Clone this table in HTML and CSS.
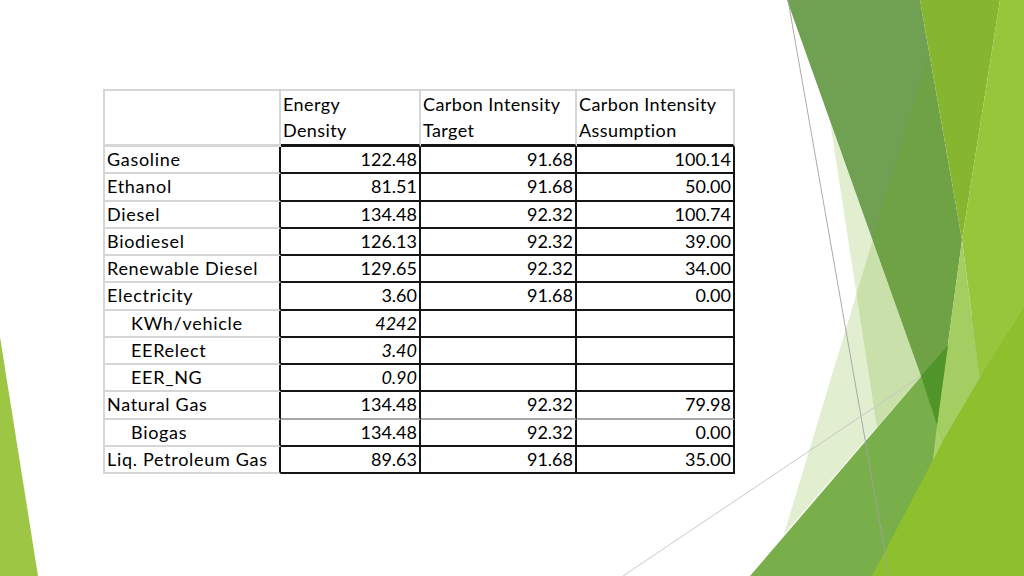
FILE: index.html
```html
<!DOCTYPE html>
<html lang="en">
<head>
<meta charset="utf-8">
<title>Fuel table</title>
<link rel="stylesheet" href="styles.css">
</head>
<body>
<div class="slide">
  <svg class="art" width="1024" height="576" viewBox="0 0 1024 576" aria-hidden="true">
    <polygon points="0,337 38,576 0,576" fill="#9cc643"/>
    <polygon points="830,121 877,428 921,376" fill="rgba(110,170,20,0.2)"/>
    <polygon points="787,0 920,0 962,240 937,425 921,376" fill="#70a051"/>
    <polygon points="928,57 962,240 937,425 921,376 784,534" fill="rgba(110,170,20,0.2)"/>
    <polygon points="920,0 1000,0 962,240" fill="#86b52f"/>
    <polygon points="750,576 948,345 1024,258 1024,576" fill="#78af4a"/>
    <polygon points="1000,0 1024,0 1024,308 980,378 962,240" fill="#97c63d"/>
    <polygon points="962,240 980,378 943,441 937,425" fill="#a4ce62"/>
    <polygon points="937,425 943,441 932,468" fill="#a9d06a"/>
    <polygon points="1024,308 1024,576 872,576 943,441 980,378" fill="#8dc02c"/>
    <polygon points="921,376 948,345 937,425" fill="#50952a"/>
    <line x1="788" y1="0" x2="889" y2="576" stroke="#a0a0a0" stroke-width="0.9"/>
    <line x1="623" y1="576" x2="921" y2="376" stroke="#c4c4c4" stroke-width="0.9"/>
  </svg>
  <div class="table">
    <div class="h first"></div>
    <div class="h">Energy<br>Density</div>
    <div class="h">Carbon Intensity<br>Target</div>
    <div class="h">Carbon Intensity<br>Assumption</div>

    <div class="l">Gasoline</div><div class="n">122.48</div><div class="n">91.68</div><div class="n">100.14</div>
    <div class="l">Ethanol</div><div class="n">81.51</div><div class="n">91.68</div><div class="n">50.00</div>
    <div class="l">Diesel</div><div class="n">134.48</div><div class="n">92.32</div><div class="n">100.74</div>
    <div class="l">Biodiesel</div><div class="n">126.13</div><div class="n">92.32</div><div class="n">39.00</div>
    <div class="l">Renewable Diesel</div><div class="n">129.65</div><div class="n">92.32</div><div class="n">34.00</div>
    <div class="l">Electricity</div><div class="n">3.60</div><div class="n">91.68</div><div class="n">0.00</div>
    <div class="l sub">KWh/vehicle</div><div class="n it">4242</div><div class="n"></div><div class="n"></div>
    <div class="l sub">EERelect</div><div class="n it">3.40</div><div class="n"></div><div class="n"></div>
    <div class="l sub">EER_NG</div><div class="n it">0.90</div><div class="n"></div><div class="n"></div>
    <div class="l">Natural Gas</div><div class="n gb">134.48</div><div class="n gb">92.32</div><div class="n gb">79.98</div>
    <div class="l sub">Biogas</div><div class="n">134.48</div><div class="n">92.32</div><div class="n">0.00</div>
    <div class="l">Liq. Petroleum Gas</div><div class="n">89.63</div><div class="n">91.68</div><div class="n">35.00</div>
  </div>
</div>
</body>
</html>
```
FILE: styles.css
```css
html, body {
  margin: 0;
  padding: 0;
  background: #ffffff;
}

.slide {
  position: relative;
  width: 1024px;
  height: 576px;
  overflow: hidden;
  background: #ffffff;
  font-family: "Lato", "Liberation Sans", sans-serif;
  color: #000000;
}

.art {
  position: absolute;
  left: 0;
  top: 0;
}

.table {
  position: relative;
  margin: 89px 0 0 103px;
  display: grid;
  grid-template-columns: 178px 140px 156px 158px;
  grid-template-rows: 58px repeat(12, 27.25px);
  width: 632px;
  font-size: 18px;
  letter-spacing: 0.7px;
}

.table > div {
  box-sizing: border-box;
  white-space: nowrap;
  overflow: hidden;
}

.h {
  border-top: 2px solid #d6d6d6;
  border-right: 2px solid #d6d6d6;
  border-bottom: 3px solid #151515;
  line-height: 26px;
  padding: 0 0 2px 2px;
  letter-spacing: 0.4px;
}

.h.first {
  border-left: 2px solid #d6d6d6;
  border-bottom: 3px solid #d6d6d6;
}

.l {
  border-left: 2px solid #d6d6d6;
  border-bottom: 2px solid #d6d6d6;
  border-right: 2px solid #151515;
  line-height: 25px;
  padding-left: 2px;
}

.l.sub {
  padding-left: 26px;
}

.n {
  border-right: 2px solid #151515;
  border-bottom: 2px solid #151515;
  line-height: 25px;
  text-align: right;
  padding-right: 2px;
  letter-spacing: 0;
}

.n.gb {
  border-bottom-color: #a8a8a8;
}

.n.it {
  font-style: italic;
}
```
